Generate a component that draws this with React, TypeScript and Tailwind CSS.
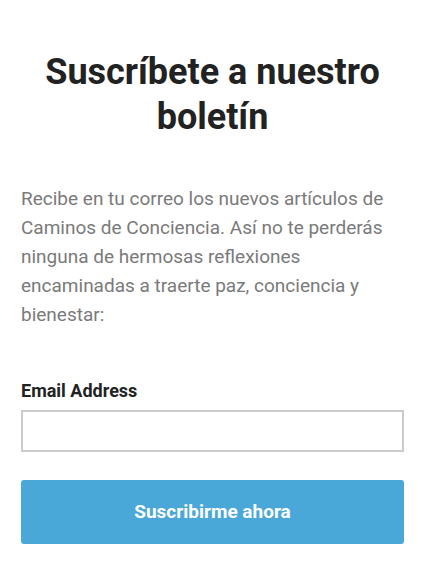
export default function App() {
  return (
    <div className="min-h-[567px] bg-white px-[21px] pt-[50px] font-['Roboto',sans-serif]">
      <h2 className="text-center text-[36px] leading-[45px] font-bold text-[#222222]">
        Suscríbete a nuestro boletín
      </h2>
      <p className="mt-[44px] text-[19px] leading-[29px] text-[#7a7a7a]">
        Recibe en tu correo los nuevos artículos de Caminos de Conciencia. Así no te perderás
        ninguna de hermosas reflexiones encaminadas a traerte paz, conciencia y bienestar:
      </p>
      <form className="mt-[50px]" onSubmit={(e) => e.preventDefault()}>
        <label className="block text-[18px] leading-[24px] font-bold text-[#222222]">
          Email Address
        </label>
        <input
          type="email"
          className="mt-[7px] block h-[42px] w-full border-2 border-[#cccccc] bg-white px-3 outline-none"
        />
        <button
          type="submit"
          className="mt-[28px] block h-[64px] w-full rounded-[3px] bg-[#4aa8d9] text-[19px] font-bold text-white"
        >
          Suscribirme ahora
        </button>
      </form>
    </div>
  )
}
